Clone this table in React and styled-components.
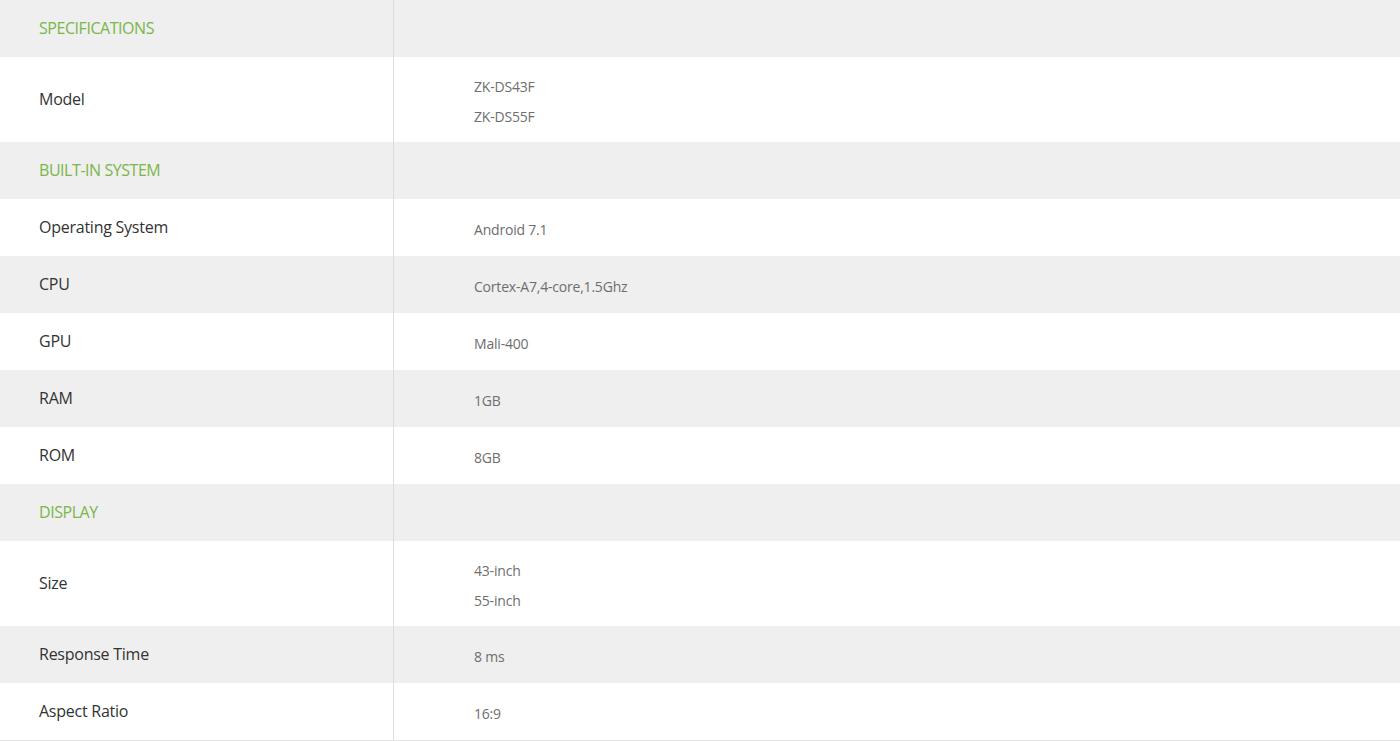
import React from "react"
import styled, { createGlobalStyle } from "styled-components"

const GlobalStyle = createGlobalStyle`
    body {
        margin: 0;
        background: #FFFFFF;
        font-family: 'Open Sans', 'Liberation Sans', sans-serif;
    }
`

const specs = [
    { section: "SPECIFICATIONS" },
    { label: "Model", values: ["ZK-DS43F", "ZK-DS55F"] },
    { section: "BUILT-IN SYSTEM" },
    { label: "Operating System", values: ["Android 7.1"] },
    { label: "CPU", values: ["Cortex-A7,4-core,1.5Ghz"] },
    { label: "GPU", values: ["Mali-400"] },
    { label: "RAM", values: ["1GB"] },
    { label: "ROM", values: ["8GB"] },
    { section: "DISPLAY" },
    { label: "Size", values: ["43-inch", "55-inch"] },
    { label: "Response Time", values: ["8 ms"] },
    { label: "Aspect Ratio", values: ["16:9"] },
]

export default function App(){
    return (
        <>
            <GlobalStyle />
            <Table>
                {specs.map((row, i) => (
                    <Row key={i} $gray={i % 2 === 0} $tall={row.values && row.values.length > 1}>
                        {row.section ? (
                            <>
                                <Label><SectionTitle>{row.section}</SectionTitle></Label>
                                <Value />
                            </>
                        ) : (
                            <>
                                <Label>{row.label}</Label>
                                <Value>
                                    {row.values.map(v => <ValueLine key={v}>{v}</ValueLine>)}
                                </Value>
                            </>
                        )}
                    </Row>
                ))}
            </Table>
        </>
    )
}

const Table = styled.div`
    width: 1400px;
    border-bottom: 1px solid #E4E4E4;
`

const Row = styled.div`
    display: grid;
    grid-template-columns: 394px 1fr;
    height: ${p => p.$tall ? "85px" : "57px"};
    background: ${p => p.$gray ? "#EFEFEF" : "#FFFFFF"};
`

const Label = styled.div`
    display: flex;
    align-items: center;
    padding-left: 39px;
    padding-bottom: 2px;
    border-right: 1px solid #DDDDDD;
    font-size: 16px;
    letter-spacing: -0.25px;
    color: #333333;
`

const SectionTitle = styled.span`
    color: #7AB648;
    font-size: 16px;
    letter-spacing: -0.45px;
`

const Value = styled.div`
    display: flex;
    flex-direction: column;
    justify-content: center;
    padding-left: 80px;
    padding-top: 4px;
`

const ValueLine = styled.div`
    font-size: 14px;
    line-height: 30px;
    letter-spacing: -0.2px;
    color: #6E6E6E;
`
